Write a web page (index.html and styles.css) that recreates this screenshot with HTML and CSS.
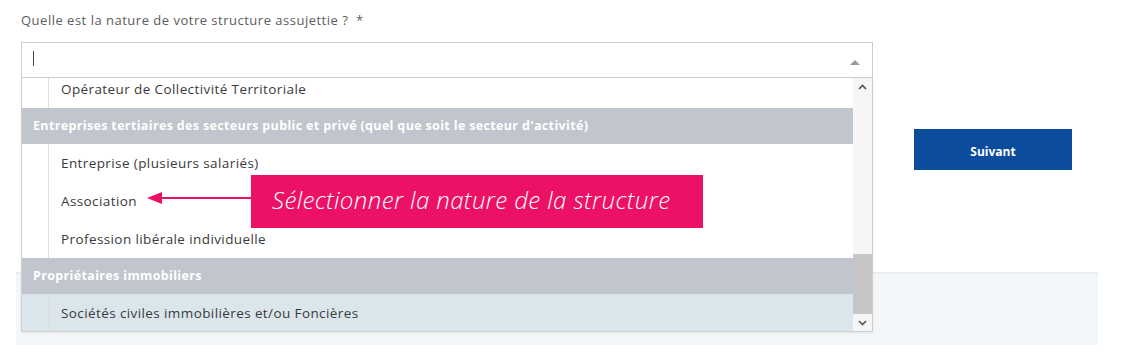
FILE: index.html
```html
<html lang="fr">
<head>
<meta charset="UTF-8">
<title>Nature de la structure</title>
<link rel="stylesheet" href="styles.css">
</head>
<body>

<section class="form-row">
  <div class="field">
    <label class="field-label">Quelle est la nature de votre structure assujettie ?&nbsp; *</label>
    <div class="select-wrap">
      <div class="select-box">
        <span class="caret"></span>
        <span class="select-arrow"></span>
      </div>

      <div class="dropdown">
        <div class="options">
          <div class="options-inner">
            <div class="option">Opérateur de Collectivité Territoriale</div>
            <div class="group">Entreprises tertiaires des secteurs public et privé (quel que soit le secteur d'activité)</div>
            <div class="option">Entreprise (plusieurs salariés)</div>
            <div class="option">Association</div>
            <div class="option">Profession libérale individuelle</div>
            <div class="group">Propriétaires immobiliers</div>
            <div class="option option-active">Sociétés civiles immobilières et/ou Foncières</div>
          </div>
        </div>
        <div class="scrollbar">
          <span class="scroll-btn">
            <svg width="9" height="6" viewBox="0 0 9 6"><path d="M1 5 L4.5 1.5 L8 5" fill="none" stroke="#555" stroke-width="1.6"/></svg>
          </span>
          <span class="scroll-track"></span>
          <span class="scroll-thumb"></span>
          <span class="scroll-btn">
            <svg width="9" height="6" viewBox="0 0 9 6"><path d="M1 1 L4.5 4.5 L8 1" fill="none" stroke="#555" stroke-width="1.6"/></svg>
          </span>
        </div>
      </div>
    </div>

    <!-- annotation -->
    <div class="callout">
      <svg class="callout-arrow" width="104" height="14" viewBox="0 0 104 14">
        <path d="M0 7 L15 1 L15 13 Z" fill="#ec1166"/>
        <rect x="14" y="6" width="90" height="2" fill="#ec1166"/>
      </svg>
      Sélectionner la nature de la structure
    </div>
  </div>

  <button class="next-btn">Suivant</button>
</section>

<div class="footer-band"></div>

</body>
</html>
```

FILE: styles.css
```css
:root{
  --textcolor: #3a3a3a;
  --labelcolor: #5c5c5c;
  --bordercolor: #cfcfcf;
  --groupcolor: #c1c5cd;
  --activecolor: #dbe6ec;
  --bluecolor: #0c4c9c;
  --pinkcolor: #ec1166;
}

*{
  margin: 0;
  padding: 0;
  box-sizing: border-box;
}

body {
  font-family: "Open Sans", Arial, sans-serif;
  background-color: #fff;
  color: var(--textcolor);
}

.form-row {
  display: flex;
  padding: 12px 0 0 21px;
}

.field {
  position: relative;
  width: 852px;
}

.field-label {
  display: block;
  font-size: 13px;
  letter-spacing: 0.5px;
  line-height: 17px;
  color: var(--labelcolor);
  margin-bottom: 13px;
}

.select-wrap {
  position: relative;
}

.select-box {
  height: 36px;
  border: 1px solid var(--bordercolor);
  display: flex;
  align-items: center;
  justify-content: space-between;
  padding: 0 12px 0 11px;
}

.caret {
  width: 1px;
  height: 15px;
  background-color: #444;
  margin-top: -4px;
}

.select-arrow {
  width: 0;
  height: 0;
  border-left: 5px solid transparent;
  border-right: 5px solid transparent;
  border-bottom: 5px solid #999;
  margin-top: 4px;
}

.dropdown {
  position: absolute;
  top: 100%;
  left: 0;
  width: 100%;
  height: 254px;
  border: 1px solid var(--bordercolor);
  border-top: none;
  background-color: #fff;
  display: flex;
  z-index: 2;
  box-shadow: 0 1px 2px rgba(0,0,0,0.08);
}

.options {
  flex: 1;
  overflow: hidden;
}

.options-inner {
  margin-top: -8px;
}

.option {
  height: 38px;
  line-height: 38px;
  margin-left: 26px;
  padding-left: 12px;
  border-left: 1px solid #dedede;
  font-size: 13.5px;
  letter-spacing: 0.4px;
  color: var(--textcolor);
  white-space: nowrap;
}

.option-active {
  background-color: var(--activecolor);
  box-shadow: -27px 0 0 var(--activecolor);
}

.group {
  height: 36px;
  line-height: 36px;
  padding-left: 11px;
  background-color: var(--groupcolor);
  color: #fff;
  font-size: 12.5px;
  letter-spacing: 0.35px;
  font-weight: 700;
  white-space: nowrap;
}

.scrollbar {
  width: 19px;
  display: flex;
  flex-direction: column;
  background-color: #f6f6f6;
}

.scroll-btn {
  height: 17px;
  display: flex;
  align-items: center;
  justify-content: center;
}

.scroll-track {
  flex: 1;
}

.scroll-thumb {
  height: 60px;
  background-color: #c6c6c6;
}

.callout {
  position: absolute;
  left: 230px;
  top: 163px;
  width: 452px;
  height: 53px;
  padding-left: 21px;
  background-color: var(--pinkcolor);
  color: #fff;
  font-family: "Open Sans", Arial, sans-serif;
  font-style: italic;
  font-weight: 300;
  font-size: 24px;
  letter-spacing: 0.4px;
  line-height: 50px;
  z-index: 3;
}

.callout-arrow {
  position: absolute;
  left: -104px;
  top: 16px;
}

.next-btn {
  width: 158px;
  height: 41px;
  margin: 117px 0 0 41px;
  padding-top: 3px;
  border: none;
  background-color: var(--bluecolor);
  color: #fff;
  font-family: "Open Sans", Arial, sans-serif;
  font-weight: 700;
  font-size: 12px;
  cursor: pointer;
}

.footer-band {
  width: 1082px;
  height: 73px;
  margin: 102px 0 0 16px;
  background-color: #f4f7f9;
  box-shadow: inset 0 3px 3px -2px rgba(0,0,0,0.08);
}
```
